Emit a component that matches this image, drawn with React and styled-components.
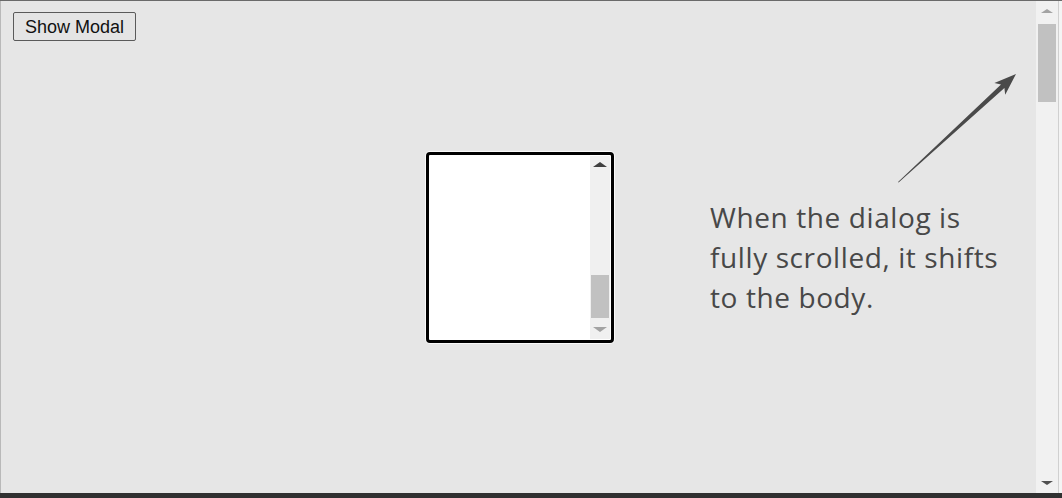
import React from "react";
import styled, { createGlobalStyle } from "styled-components";

const GlobalStyle = createGlobalStyle`
    html, body {
        margin: 0;
        padding: 0;
        overflow: hidden;
    }
    body {
        width: 1062px;
        height: 498px;
        background: #e6e6e6;
        font-family: "Liberation Sans", Arial, sans-serif;
    }
`

const Frame = styled.div`
    width: 1062px;
    height: 498px;
    display: flex;
    flex-direction: column;
    box-sizing: border-box;
    border-top: 1px solid #6a6a6a;
`

const Body = styled.div`
    flex: 1;
    display: flex;
    min-height: 0;
`

const Page = styled.div`
    position: relative;
    flex: 1;
    background: #e6e6e6;
    border-left: 1px solid #b9b9b9;
    padding: 11px 12px;
`

const Button = styled.button`
    font-family: "Liberation Sans", Arial, sans-serif;
    font-size: 18px;
    color: #111;
    background: #e4e4e4;
    border: 1px solid #5a5a5a;
    border-radius: 2px;
    height: 29px;
    width: 123px;
    padding: 1px 0 0;
`

const Backdrop = styled.div`
    position: absolute;
    inset: 0;
    display: flex;
    align-items: center;
    justify-content: center;
`

const Dialog = styled.div`
    width: 181px;
    height: 183px;
    margin-left: 2px;
    background: #fff;
    border: 3px solid #000;
    border-radius: 4px;
    box-shadow: 0 0 0 1px #fafafa;
    display: flex;
    justify-content: flex-end;
    padding: 1px 1px 1px 0;
`

const Scrollbar = styled.div`
    width: ${p => p.$w}px;
    background: ${p => p.$track};
    display: flex;
    flex-direction: column;
    align-items: center;
    flex-shrink: 0;
`

const Arrow = styled.div`
    height: ${p => p.$h}px;
    width: 100%;
    display: flex;
    align-items: center;
    justify-content: center;
    &::before {
        content: "";
        border-left: ${p => p.$size}px solid transparent;
        border-right: ${p => p.$size}px solid transparent;
        ${p => p.$up ? "border-bottom" : "border-top"}: ${p => p.$size * 0.8}px solid ${p => p.$color};
    }
`

const Track = styled.div`
    flex: 1;
    width: 100%;
    display: flex;
    flex-direction: column;
    padding-top: ${p => p.$before}px;
    box-sizing: border-box;
`

const Thumb = styled.div`
    height: ${p => p.$h}px;
    margin: 0 ${p => p.$inset}px;
    background: #c1c1c1;
`

const Note = styled.div`
    position: absolute;
    left: 709px;
    top: 196px;
    font-family: "Open Sans", "Noto Sans", sans-serif;
    font-size: 28px;
    line-height: 40px;
    color: #484848;
    letter-spacing: 0.6px;
`

const Pointer = styled.svg`
    position: absolute;
    left: 890px;
    top: 66px;
`

const Edge = styled.div`
    width: 3px;
    background: #f4f4f4;
    border-left: 1px solid #d0d0d0;
`

const BottomBar = styled.div`
    height: 5px;
    background: #303030;
`

function App() {
    return (
        <Frame>
            <GlobalStyle />
            <Body>
                <Page>
                    <Button>Show Modal</Button>
                    <Backdrop>
                        <Dialog>
                            <Scrollbar $w={20} $track="#f0f0f0">
                                <Arrow $h={18} $up $size={7} $color="#404040" />
                                <Track $before={101}>
                                    <Thumb $h={43} $inset={1} />
                                </Track>
                                <Arrow $h={18} $size={7} $color="#a3a3a3" />
                            </Scrollbar>
                        </Dialog>
                    </Backdrop>
                    <Pointer width="132" height="122" viewBox="0 0 132 122">
                        <polygon
                            points="7,115 110,17.4 103.4,16 125,7 114.2,27.8 113.4,21 7.6,115.6"
                            fill="#4a4a4a"
                        />
                    </Pointer>
                    <Note>
                        When the dialog is<br />
                        fully scrolled, it shifts<br />
                        to the body.
                    </Note>
                </Page>
                <Scrollbar $w={22} $track="#f1f1f1">
                    <Arrow $h={20} $up $size={6} $color="#a3a3a3" />
                    <Track $before={3}>
                        <Thumb $h={78} $inset={2} />
                    </Track>
                    <Arrow $h={20} $size={6} $color="#505050" />
                </Scrollbar>
                <Edge />
            </Body>
            <BottomBar />
        </Frame>
    );
}

export default App;
